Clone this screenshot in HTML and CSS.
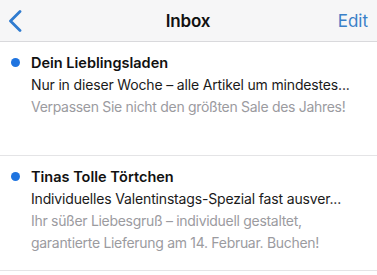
FILE: index.html
```html
<!DOCTYPE html>
<html lang="de">
<head>
<meta charset="utf-8">
<title>Inbox</title>
<link rel="stylesheet" href="styles.css">
</head>
<body>
<div class="screen">
  <header class="nav">
    <button class="back" aria-label="Zurück">
      <svg width="14" height="22" viewBox="0 0 14 22"><path d="M12 1.5 L2.5 11 L12 20.5" fill="none" stroke="#2f7bd0" stroke-width="2.8" stroke-linecap="round" stroke-linejoin="round"/></svg>
    </button>
    <h1 class="title">Inbox</h1>
    <button class="edit">Edit</button>
  </header>
  <ul class="list">
    <li class="msg">
      <span class="dot"></span>
      <div class="body">
        <div class="sender">Dein Lieblingsladen</div>
        <div class="subject">Nur in dieser Woche – alle Artikel um mindestes...</div>
        <div class="preview">Verpassen Sie nicht den größten Sale des Jahres!</div>
      </div>
    </li>
    <li class="msg">
      <span class="dot"></span>
      <div class="body">
        <div class="sender">Tinas Tolle Törtchen</div>
        <div class="subject">Individuelles Valentinstags-Spezial fast ausver...</div>
        <div class="preview">Ihr süßer Liebesgruß – individuell gestaltet,<br>garantierte Lieferung am 14. Februar. Buchen!</div>
      </div>
    </li>
  </ul>
</div>
</body>
</html>
```
FILE: styles.css
```css
* { box-sizing: border-box; }
html, body { margin: 0; padding: 0; background: #fff; }
body { font-family: Inter, "Noto Sans", sans-serif; color: #111; }
.screen { width: 377px; height: 275px; overflow: hidden; background: #fff; }
.nav {
  height: 42px;
  background: #f6f6f7;
  border-bottom: 1px solid #d9d9dc;
  display: grid;
  grid-template-columns: 1fr auto 1fr;
  align-items: center;
  padding: 0 9px 0 8px;
}
.back { justify-self: start; background: none; border: 0; padding: 0; display: flex; }
.title { margin: 0; font-size: 17px; font-weight: 600; letter-spacing: -0.2px; color: #111; }
.edit { justify-self: end; background: none; border: 0; padding: 0; font: inherit; font-size: 17px; color: #3a80c8; }
.list { list-style: none; margin: 0; padding: 0; }
.msg {
  display: flex;
  align-items: flex-start;
  padding: 10px 8px 16px 11px;
  border-bottom: 1px solid #e4e4e6;
}
.msg:first-child { padding-bottom: 15px; }
.dot { width: 9px; height: 9px; border-radius: 50%; background: #1f74e0; margin-top: 6px; flex: none; }
.body { margin-left: 11px; min-width: 0; font-size: 14px; line-height: 22px; }
.sender { font-weight: 600; font-size: 14.5px; color: #111; }
.subject { color: #1a1a1a; white-space: nowrap; letter-spacing: -0.16px; }
.preview { color: #9b9b9f; min-height: 44px; letter-spacing: -0.3px; }
```
